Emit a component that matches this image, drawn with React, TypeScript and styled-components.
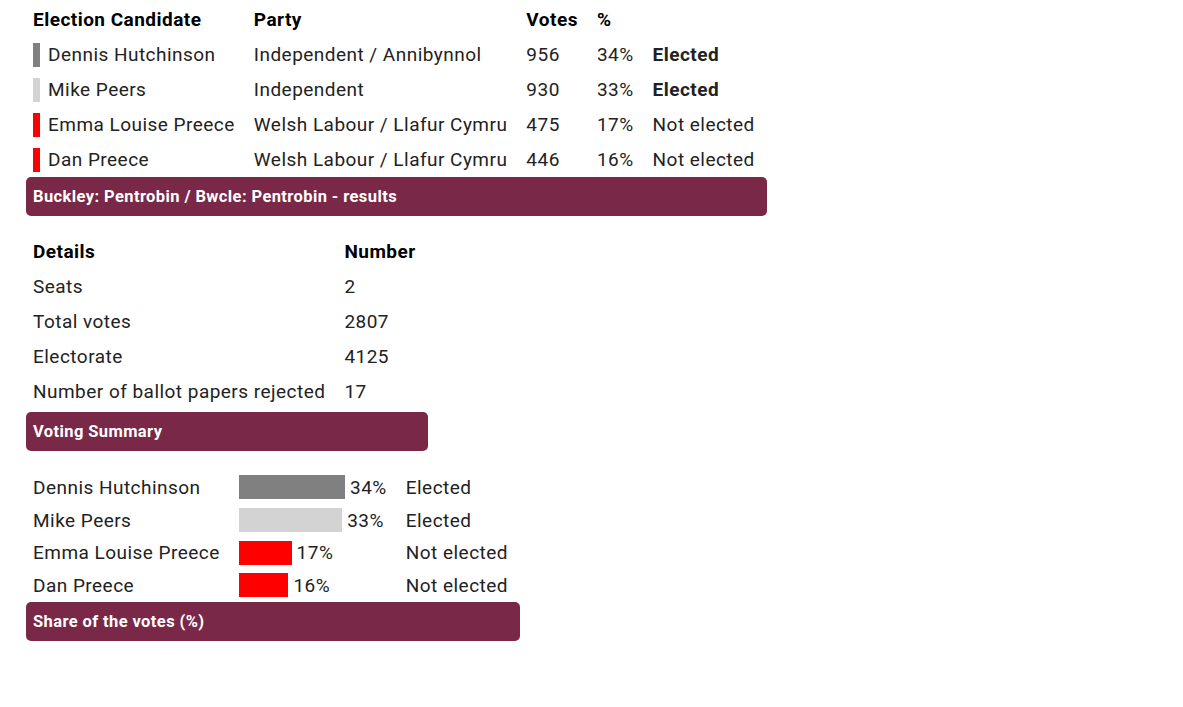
import React from 'react';
import styled, { createGlobalStyle } from 'styled-components';

interface Candidate {
  name: string;
  party: string;
  votes: number;
  colour: string;
  elected: boolean;
}

const candidates: Candidate[] = [
  { name: 'Dennis Hutchinson', party: 'Independent / Annibynnol', votes: 956, colour: '#808080', elected: true },
  { name: 'Mike Peers', party: 'Independent', votes: 930, colour: '#d3d3d3', elected: true },
  { name: 'Emma Louise Preece', party: 'Welsh Labour / Llafur Cymru', votes: 475, colour: '#ff0000', elected: false },
  { name: 'Dan Preece', party: 'Welsh Labour / Llafur Cymru', votes: 446, colour: '#ff0000', elected: false },
];

const totalVotes = 2807;

const details = [
  { label: 'Seats', value: '2' },
  { label: 'Total votes', value: '2807' },
  { label: 'Electorate', value: '4125' },
  { label: 'Number of ballot papers rejected', value: '17' },
];

const GlobalStyle = createGlobalStyle`
  body {
    margin: 0;
    background: #fff;
    font-family: Roboto, 'Noto Sans', sans-serif;
    color: #222;
  }
`;

const Page = styled.div`
  display: flex;
  flex-direction: column;
  align-items: flex-start;
  gap: 18px;
  padding: 2px 0 0 26px;
`;

const Table = styled.table<{ $mt?: number }>`
  border-collapse: collapse;
  font-size: 19px;
  letter-spacing: 0.47px;
  margin-top: ${(p) => p.$mt ?? 0}px;
`;

const Caption = styled.caption<{ $mt?: number }>`
  caption-side: bottom;
  text-align: left;
  background: #7a2848;
  color: #fff;
  font-weight: 700;
  font-size: 16.5px;
  letter-spacing: 0.4px;
  height: 39px;
  line-height: 39px;
  padding: 0 7px;
  margin-top: ${(p) => p.$mt ?? 0}px;
  border-radius: 5px;
`;

const Th = styled.th`
  text-align: left;
  font-weight: 700;
  color: #000;
  height: 35px;
  padding: 0 12px 0 7px;
  white-space: nowrap;
`;

const Td = styled.td<{ $bold?: boolean; $short?: boolean }>`
  height: ${(p) => (p.$short ? '32.7px' : '35px')};
  padding: 0 12px 0 7px;
  white-space: nowrap;
  font-weight: ${(p) => (p.$bold ? 700 : 400)};
  vertical-align: middle;
`;

const NameCell = styled.div`
  display: flex;
  align-items: center;
  gap: 8px;
`;

const Swatch = styled.span<{ $colour: string }>`
  display: inline-block;
  width: 7px;
  height: 24px;
  background: ${(p) => p.$colour};
`;

const BarCell = styled.div`
  display: flex;
  align-items: center;
  gap: 5px;
`;

const Bar = styled.span<{ $colour: string }>`
  display: inline-block;
  height: 24px;
  background: ${(p) => p.$colour};
`;

const pct = (v: number) => Math.round((v / totalVotes) * 100);

const App = () => {
  return (
    <>
      <GlobalStyle />
      <Page>
        <Table>
          <Caption>Buckley: Pentrobin / Bwcle: Pentrobin - results</Caption>
          <thead>
            <tr>
              <Th>Election Candidate</Th>
              <Th>Party</Th>
              <Th>Votes</Th>
              <Th>%</Th>
              <Th></Th>
            </tr>
          </thead>
          <tbody>
            {candidates.map((c) => (
              <tr key={c.name}>
                <Td>
                  <NameCell>
                    <Swatch $colour={c.colour} />
                    {c.name}
                  </NameCell>
                </Td>
                <Td>{c.party}</Td>
                <Td>{c.votes}</Td>
                <Td>{pct(c.votes)}%</Td>
                <Td $bold={c.elected}>{c.elected ? 'Elected' : 'Not elected'}</Td>
              </tr>
            ))}
          </tbody>
        </Table>

        <Table>
          <Caption $mt={3}>Voting Summary</Caption>
          <thead>
            <tr>
              <Th>Details</Th>
              <Th>Number</Th>
            </tr>
          </thead>
          <tbody>
            {details.map((d) => (
              <tr key={d.label}>
                <Td>{d.label}</Td>
                <Td>{d.value}</Td>
              </tr>
            ))}
          </tbody>
        </Table>

        <Table $mt={2}>
          <Caption>Share of the votes (%)</Caption>
          <tbody>
            {candidates.map((c) => (
              <tr key={c.name}>
                <Td $short>{c.name}</Td>
                <Td $short>
                  <BarCell>
                    <Bar $colour={c.colour} style={{ width: (c.votes / totalVotes) * 312 }} />
                    {pct(c.votes)}%
                  </BarCell>
                </Td>
                <Td $short>{c.elected ? 'Elected' : 'Not elected'}</Td>
              </tr>
            ))}
          </tbody>
        </Table>
      </Page>
    </>
  );
};

export default App;
